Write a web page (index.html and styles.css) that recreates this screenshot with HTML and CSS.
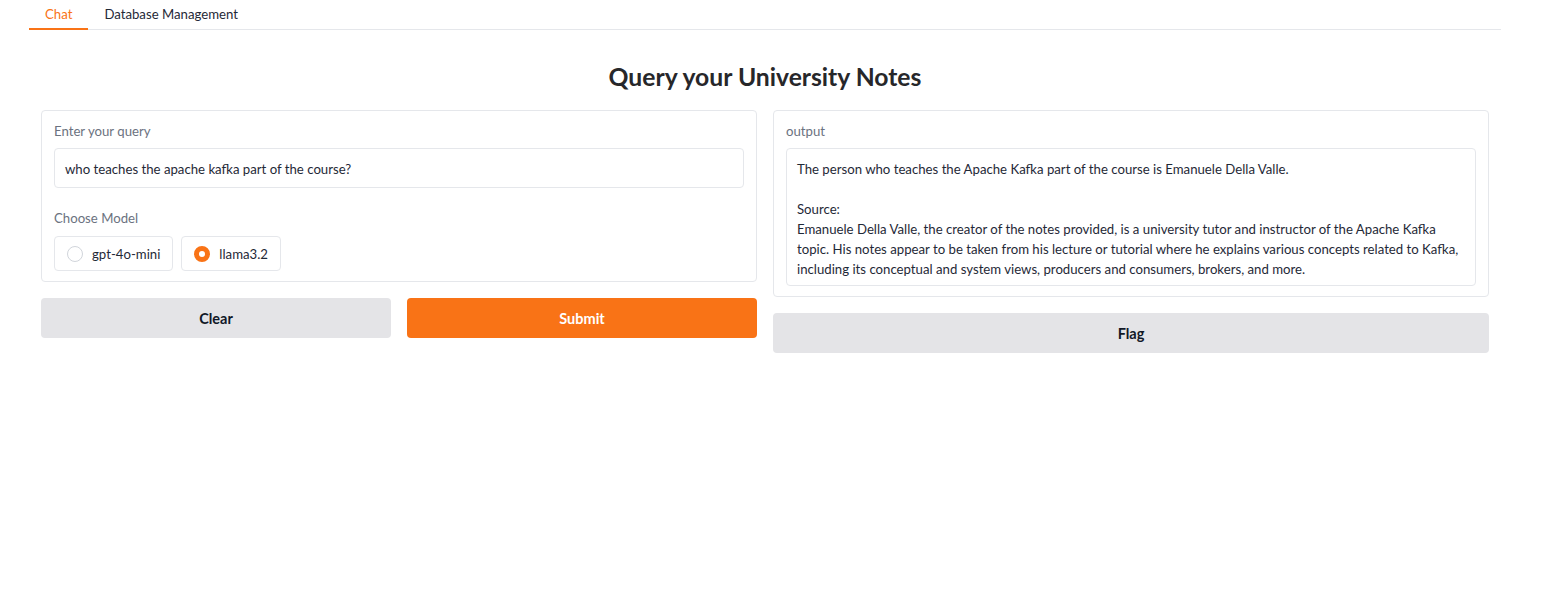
FILE: index.html
```html
<!DOCTYPE html>
<html>
<head>
<meta charset="utf-8">
<link rel="stylesheet" href="styles.css">
</head>
<body>
<div class="app">
  <div class="tabs">
    <div class="tab active">Chat</div>
    <div class="tab">Database Management</div>
  </div>
  <div class="tab-body">
    <h1 class="title">Query your University Notes</h1>
    <div class="cols">
      <div class="col">
        <div class="block">
          <div class="label">Enter your query</div>
          <div class="textbox single">who teaches the apache kafka part of the course?</div>
          <div class="label model-label">Choose Model</div>
          <div class="radios">
            <div class="radio"><span class="dot"></span>gpt-4o-mini</div>
            <div class="radio"><span class="dot on"></span>llama3.2</div>
          </div>
        </div>
        <div class="btn-row">
          <button class="btn secondary">Clear</button>
          <button class="btn primary">Submit</button>
        </div>
      </div>
      <div class="col">
        <div class="block">
          <div class="label">output</div>
          <div class="textbox multi">The person who teaches the Apache Kafka part of the course is Emanuele Della Valle.<br><br>Source:<br>Emanuele Della Valle, the creator of the notes provided, is a university tutor and instructor of the Apache Kafka topic. His notes appear to be taken from his lecture or tutorial where he explains various concepts related to Kafka, including its conceptual and system views, producers and consumers, brokers, and more.</div>
        </div>
        <div class="btn-row">
          <button class="btn secondary">Flag</button>
        </div>
      </div>
    </div>
  </div>
</div>
</body>
</html>
```

FILE: styles.css
```css
* { box-sizing: border-box; }
html, body { margin: 0; padding: 0; background: #fff; }
body {
  font-family: Lato, "Noto Sans", sans-serif;
  color: #1f2937;
}
.app {
  width: 1472px;
  margin-left: 29px;
}
.tabs {
  display: flex;
  border-bottom: 1px solid #e5e7eb;
  height: 30px;
}
.tab {
  font-size: 13.2px;
  color: #1f2937;
  padding: 6px 16px 0;
  height: 30px;
  line-height: 16px;
}
.tab.active {
  color: #f97316;
  border-bottom: 2px solid #f97316;
  margin-bottom: -1px;
}
.tab-body {
  padding: 0 12px;
}
.title {
  margin: 32px 0 0;
  font-size: 24.7px;
  font-weight: 700;
  color: #27272a;
  text-align: center;
  line-height: 30px;
  height: 30px;
}
.cols {
  display: flex;
  gap: 16px;
  margin-top: 18px;
}
.col {
  flex: 1;
  display: flex;
  flex-direction: column;
  gap: 16px;
}
.block {
  border: 1px solid #e5e7eb;
  border-radius: 4px;
  padding: 12px 12px 10px;
}
.label {
  font-size: 13.2px;
  color: #6b7280;
  line-height: 16px;
  height: 16px;
  margin-bottom: 9px;
}
.model-label { margin-top: 22px; margin-bottom: 10px; }
.textbox {
  border: 1px solid #e5e7eb;
  border-radius: 4px;
  font-size: 13.2px;
  line-height: 20px;
  color: #1f2937;
  padding: 10px 10px 8px;
}
.textbox.single { height: 40px; }
.textbox.multi { padding: 10px 10px 6px; }
.radios {
  display: flex;
  gap: 8px;
}
.radio {
  display: flex;
  align-items: center;
  gap: 9px;
  height: 35px;
  padding: 0 12px;
  border: 1px solid #e5e7eb;
  border-radius: 4px;
  font-size: 13.2px;
  color: #1f2937;
}
.dot {
  width: 16px;
  height: 16px;
  border-radius: 50%;
  border: 1px solid #d1d5db;
  background: #fff;
}
.dot.on {
  border: 5px solid #f97316;
  background: #fff;
}
.btn-row {
  display: flex;
  gap: 16px;
}
.btn {
  flex: 1;
  height: 40px;
  border: none;
  border-radius: 4px;
  font-family: Lato, "Noto Sans", sans-serif;
  font-size: 14.5px;
  font-weight: 700;
  cursor: pointer;
}
.btn.secondary { background: #e4e4e7; color: #111827; }
.btn.primary { background: #f97316; color: #fff; }
```
